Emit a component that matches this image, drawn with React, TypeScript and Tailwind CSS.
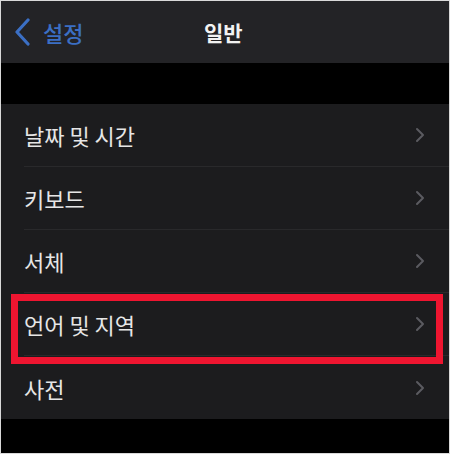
const items = ["날짜 및 시간", "키보드", "서체", "언어 및 지역", "사전"]

function ChevronRight() {
  return (
    <svg width="10" height="16" viewBox="0 0 10 16" fill="none">
      <path d="M2 2l6 6-6 6" stroke="#5b5b60" strokeWidth="2" strokeLinecap="round" strokeLinejoin="round" />
    </svg>
  )
}

export default function App() {
  return (
    <div
      className="w-[450px] h-[454px] border border-[#d9d9d9] bg-black flex flex-col overflow-hidden"
      style={{ fontFamily: '"Noto Sans CJK KR", "Noto Sans", sans-serif' }}
    >
      {/* 상단 바 */}
      <div className="relative h-[62px] bg-[#232326] flex items-center shrink-0">
        <div className="flex items-center pl-[13px] gap-[11px]">
          <svg width="18" height="28" viewBox="0 0 18 28" fill="none">
            <path d="M14 2L3 14l11 12" stroke="#3b6fc4" strokeWidth="3.2" strokeLinecap="round" strokeLinejoin="round" />
          </svg>
          <span className="text-[22px] font-medium text-[#3b6fc4] leading-none">설정</span>
        </div>
        <span className="absolute left-[203px] text-[21px] font-bold text-[#f2f2f2] leading-none">일반</span>
      </div>

      <div className="h-[41px] bg-black shrink-0" />

      {/* 목록 */}
      <div className="bg-[#1c1c1e]">
        {items.map((label, i) => (
          <div key={label} className="relative h-[63px] pl-[23px] flex">
            <div
              className={`flex-1 flex items-center justify-between pr-[24px] ${
                i < items.length - 1 ? "border-b border-[#29292b]" : ""
              }`}
            >
              <span className="text-[22px] text-[#e6e6e6] leading-none">{label}</span>
              <ChevronRight />
            </div>
            {label === "언어 및 지역" && (
              <div className="absolute left-[10px] top-[1px] w-[432px] h-[70px] border-[7px] border-[#ee1530]" />
            )}
          </div>
        ))}
      </div>
    </div>
  )
}
